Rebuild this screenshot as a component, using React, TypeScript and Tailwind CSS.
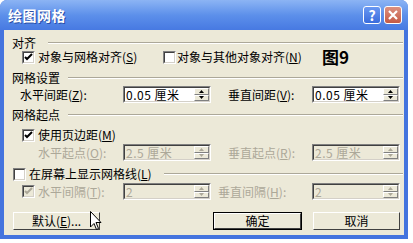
import React from 'react';

const font = { fontFamily: '"Noto Sans CJK SC", "Liberation Sans", sans-serif' };

function Key({ k }: { k: string }) {
  return (
    <span>
      (<span className="underline">{k}</span>)
    </span>
  );
}

function Check({ checked, disabled }: { checked?: boolean; disabled?: boolean }) {
  return (
    <span
      className={`w-[13px] h-[13px] shrink-0 flex items-center justify-center border border-t-[#808080] border-l-[#808080] border-b-white border-r-white ${disabled ? 'bg-[#ece9d8]' : 'bg-white'}`}
    >
      <span className="w-[11px] h-[11px] border border-t-[#404040] border-l-[#404040] border-b-[#d4d0c8] border-r-[#d4d0c8] flex items-center justify-center">
        {checked && (
          <svg width="9" height="9" viewBox="0 0 9 9">
            <path d="M1 4 L3 6 L8 1" stroke={disabled ? '#aca899' : '#000'} strokeWidth="2" fill="none" />
          </svg>
        )}
      </span>
    </span>
  );
}

function Spin({ value, disabled }: { value: string; disabled?: boolean }) {
  return (
    <div className="w-[88px] h-[17px] flex border border-t-[#808080] border-l-[#808080] border-b-white border-r-white">
      <div
        className={`flex-1 flex border border-t-[#404040] border-l-[#404040] border-b-[#d4d0c8] border-r-[#d4d0c8] ${disabled ? 'bg-[#ece9d8] text-[#aca899]' : 'bg-white text-black'}`}
      >
        <span className="flex-1 pl-[1px] text-[12px] leading-[13px] whitespace-pre tracking-[0.5px]">{value}</span>
        <div className="w-[15px] flex flex-col">
          {[0, 1].map((i) => (
            <div
              key={i}
              className="flex-1 bg-[#ece9d8] border border-t-white border-l-white border-b-[#808080] border-r-[#808080] flex items-center justify-center"
            >
              <svg width="5" height="3" viewBox="0 0 5 3">
                <path d={i === 0 ? 'M2.5 0 L5 3 L0 3 Z' : 'M0 0 L5 0 L2.5 3 Z'} fill={disabled ? '#aca899' : '#000'} />
              </svg>
            </div>
          ))}
        </div>
      </div>
    </div>
  );
}

function Header({ text, gap }: { text: string; gap: number }) {
  return (
    <div className="h-[14px] flex items-center pl-[8px] pr-[1px]">
      <span className="text-[12px] leading-[14px]" style={{ marginRight: gap }}>
        {text}
      </span>
      <div className="flex-1 h-[2px] border-t border-t-[#aca899] border-b border-b-white" />
    </div>
  );
}

function Button({ children, primary }: { children: React.ReactNode; primary?: boolean }) {
  return (
    <div
      className={`h-[18px] flex items-center justify-center text-[12px] ${primary ? 'w-[89px] border border-black' : 'w-[87px]'}`}
    >
      <div className="w-full h-full flex items-center justify-center border border-t-white border-l-white border-b-[#404040] border-r-[#404040] bg-[#ece9d8]">
        {children}
      </div>
    </div>
  );
}

export default function App() {
  return (
    <div className="w-[413px] h-[243px] bg-white relative overflow-hidden text-black" style={font}>
      <div className="w-[408px] h-[239px] flex flex-col rounded-t-[7px] bg-[#4474de]">
        <div className="h-[30px] flex items-center rounded-t-[7px] bg-gradient-to-b from-[#8cb4f4] via-[#5d90ea] to-[#4779e2] pl-[8px] pr-[6px]">
          <span className="flex-1 text-white font-bold text-[14px] tracking-[0.5px] [text-shadow:1px_1px_0_#2a4fa8]">绘图网格</span>
          <div className="flex gap-[3px]">
            <div className="w-[18px] h-[18px] rounded-[3px] border border-white bg-gradient-to-b from-[#6a98f2] to-[#3a6cdc] flex items-center justify-center text-white font-bold text-[14px] leading-none">
              ?
            </div>
            <div className="w-[18px] h-[18px] rounded-[3px] border border-white bg-gradient-to-b from-[#dc9080] to-[#c45a44] flex items-center justify-center">
              <svg width="10" height="10" viewBox="0 0 10 10">
                <path d="M1 1 L9 9 M9 1 L1 9" stroke="#fff" strokeWidth="2.2" />
              </svg>
            </div>
          </div>
        </div>

        <div className="flex-1 mx-[4px] mb-[4px] bg-[#ece9d8] flex flex-col pt-[6px] text-[12px] leading-[14px]">
          <Header text="对齐" gap={12} />

          <div className="h-[14px] flex items-center">
            <div className="pl-[18px] flex items-center gap-[3px] w-[159px]">
              <Check checked />
              <span>
                对象与网格对齐<Key k="S" />
              </span>
            </div>
            <div className="flex items-center gap-[1px] w-[159px]">
              <Check />
              <span>
                对象与其他对象对齐<Key k="N" />
              </span>
            </div>
            <span className="font-bold text-[17px] leading-[14px]">图9</span>
          </div>

          <div className="mt-[7px]">
            <Header text="网格设置" gap={8} />
          </div>

          <div className="mt-[1px] h-[17px] flex items-center">
            <span className="pl-[16px] w-[119px]">
              水平间距<Key k="Z" />:
            </span>
            <Spin value="0.05 厘米" />
            <span className="ml-[17px] w-[84px]">
              垂直间距<Key k="V" />:
            </span>
            <Spin value="0.05 厘米" />
          </div>

          <div className="mt-[5px]">
            <Header text="网格起点" gap={8} />
          </div>

          <div className="mt-[6px] h-[14px] flex items-center pl-[18px] gap-[3px]">
            <Check checked />
            <span>
              使用页边距<Key k="M" />
            </span>
          </div>

          <div className="mt-[2px] h-[17px] flex items-center text-[#aca899]">
            <span className="pl-[34px] w-[119px]">
              水平起点<Key k="O" />:
            </span>
            <Spin value="2.5 厘米" disabled />
            <span className="ml-[17px] w-[84px]">
              垂直起点<Key k="R" />:
            </span>
            <Spin value="2.5 厘米" disabled />
          </div>

          <div className="mt-[6px] h-[14px] flex items-center pl-[9px] pr-[1px]">
            <Check />
            <span className="ml-[3px]">
              在屏幕上显示网格线<Key k="L" />
            </span>
            <div className="ml-[12px] flex-1 h-[2px] border-t border-t-[#aca899] border-b border-b-white" />
          </div>

          <div className="mt-[2px] h-[17px] flex items-center text-[#aca899]">
            <div className="pl-[18px] w-[119px] flex items-center gap-[3px]">
              <Check checked disabled />
              <span>
                水平间隔<Key k="T" />:
              </span>
            </div>
            <Spin value="2" disabled />
            <span className="ml-[7px] w-[94px]">
              垂直间隔<Key k="H" />:
            </span>
            <Spin value="2" disabled />
          </div>

          <div className="mt-[12px] flex items-center pl-[9px]">
            <Button>
              默认<Key k="E" />...
            </Button>
            <div className="ml-[113px]">
              <Button primary>确定</Button>
            </div>
            <div className="ml-[11px]">
              <Button>取消</Button>
            </div>
          </div>
        </div>
      </div>

      <svg className="absolute left-[90px] top-[211px]" width="12" height="20" viewBox="0 0 12 20">
        <path d="M0.5 0.5 L0.5 16 L4 12.5 L6.5 18.5 L8.5 17.5 L6 11.5 L11 11.5 Z" fill="#fff" stroke="#000" strokeWidth="1" />
      </svg>
    </div>
  );
}
